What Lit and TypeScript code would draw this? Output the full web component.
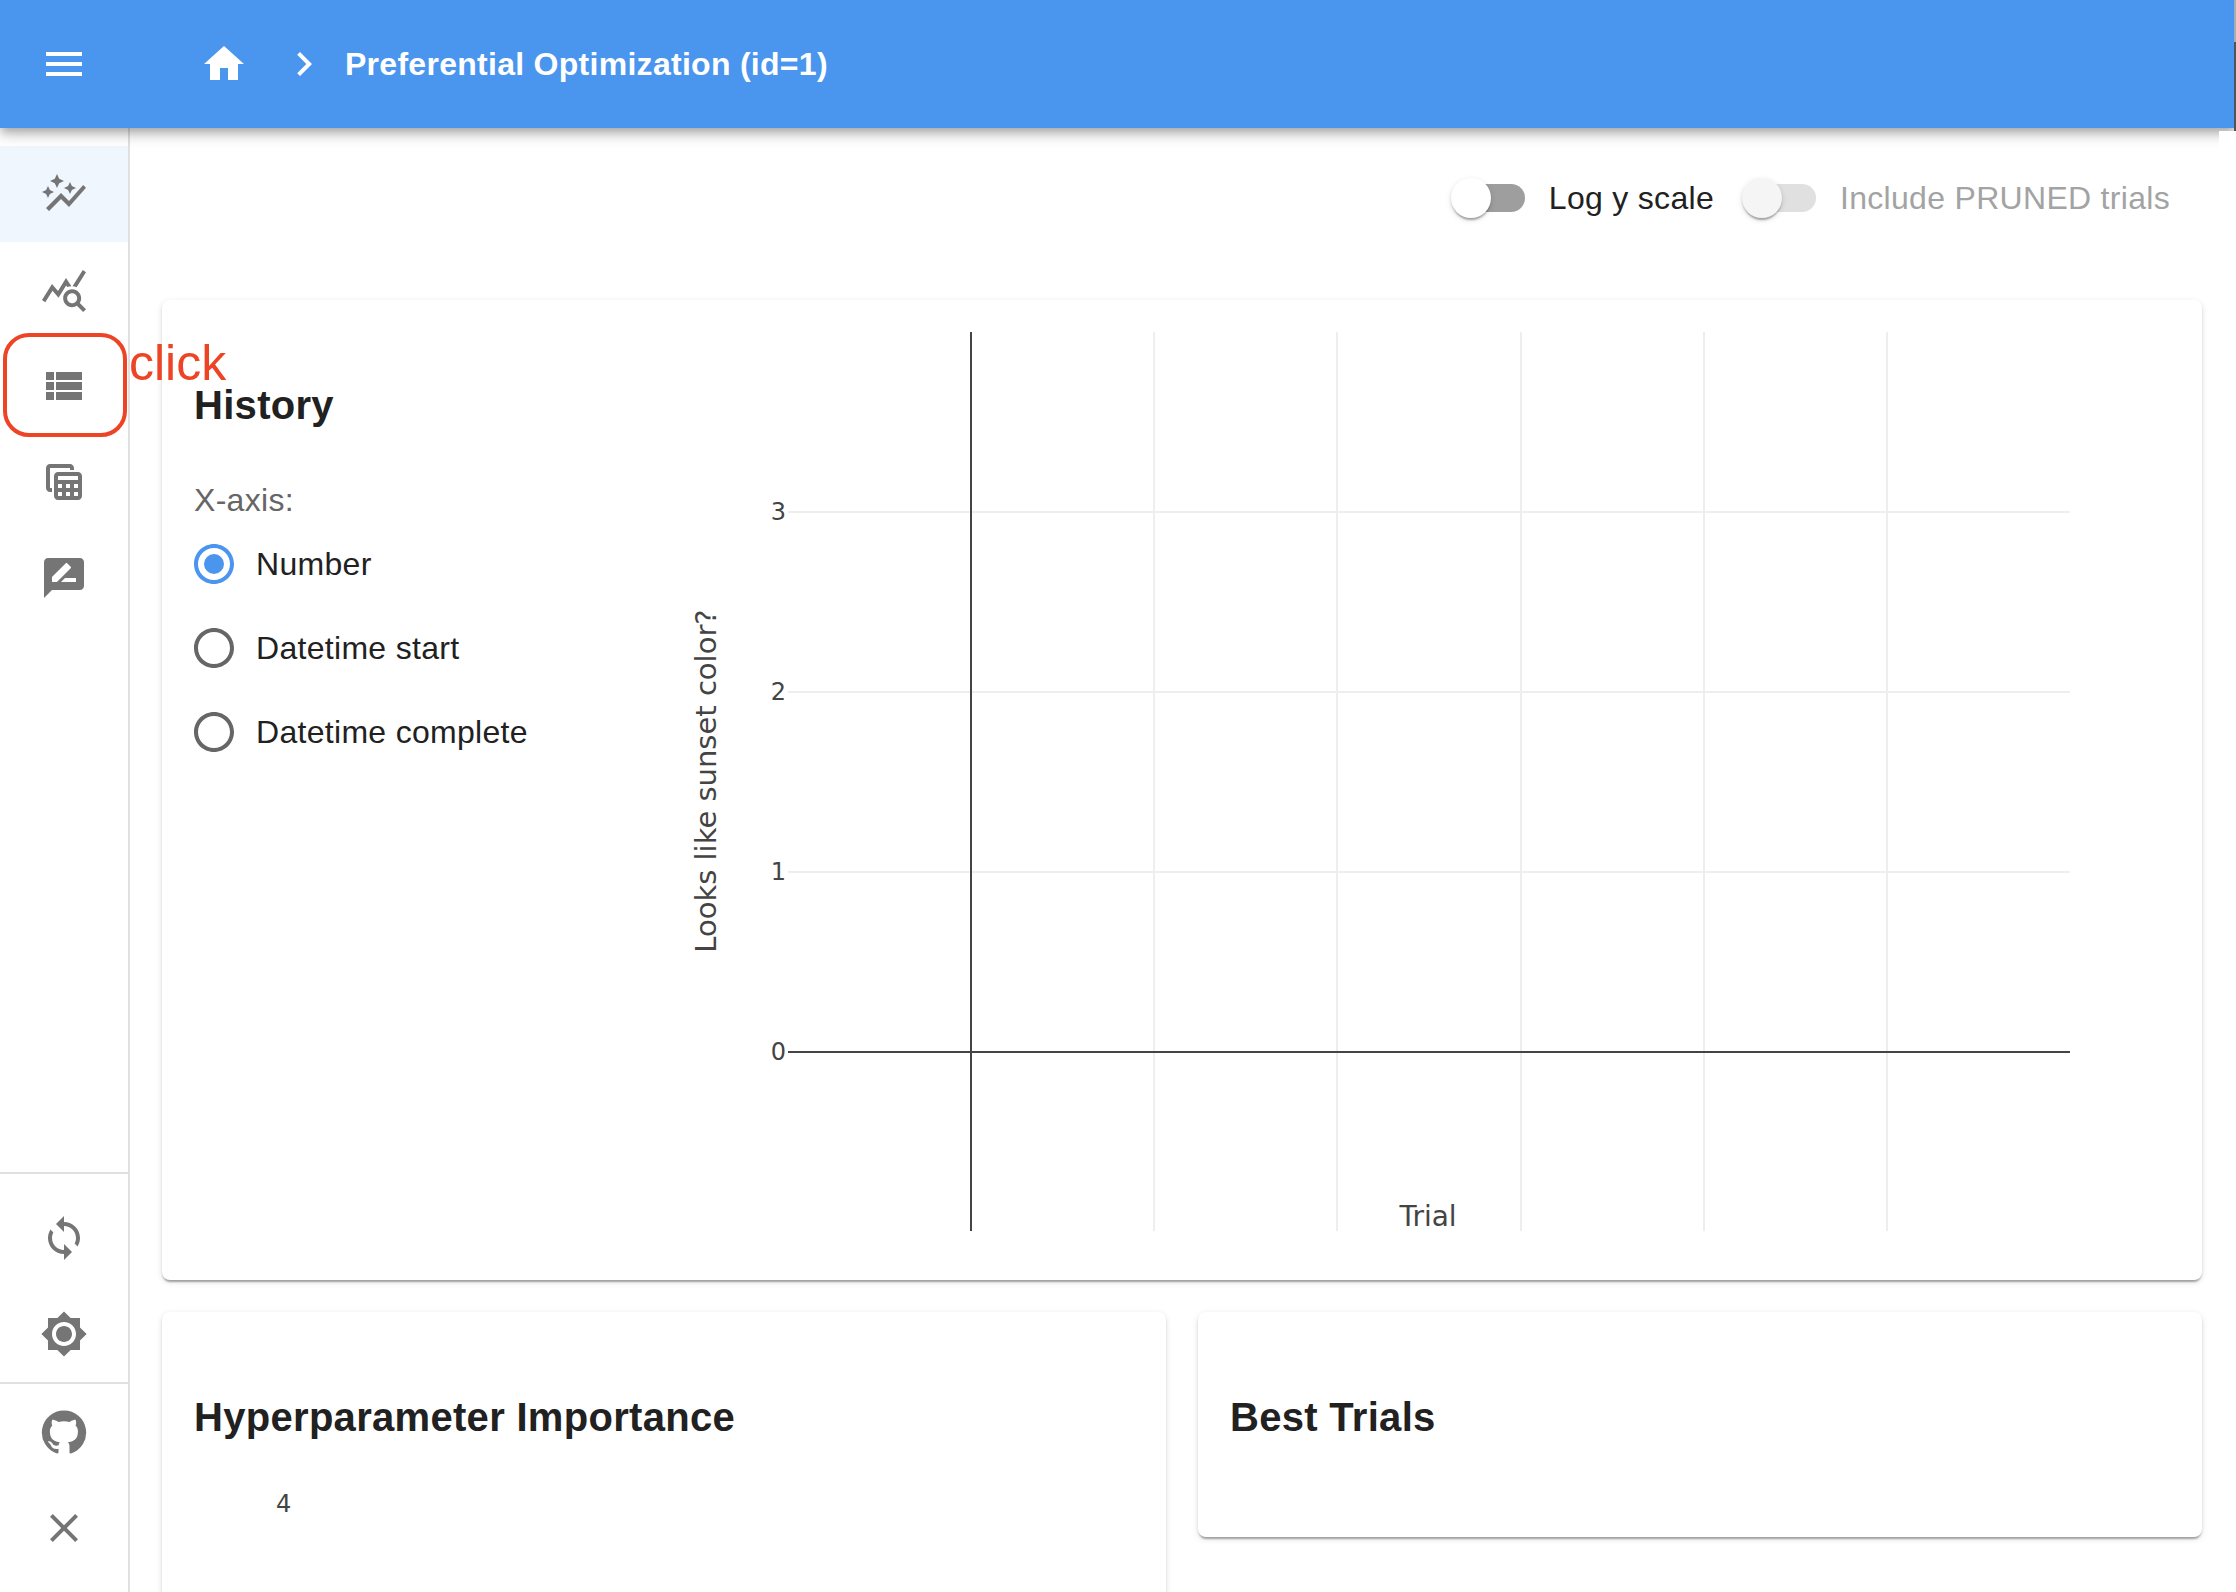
import { LitElement, html, css, svg } from 'lit';
import { customElement } from 'lit/decorators.js';

const ICONS = {
  menu: 'M3 18h18v-2H3v2zm0-5h18v-2H3v2zm0-7v2h18V6H3z',
  home: 'M10 20v-6h4v6h5v-8h3L12 3 2 12h3v8z',
  next: 'M10 6 8.59 7.41 13.17 12l-4.58 4.59L10 18l6-6z',
  autoGraph:
    'M14.06 9.94 12 9l2.06-.94L15 6l.94 2.06L18 9l-2.06.94L15 12zM4 14l.94-2.06L7 11l-2.06-.94L4 8l-.94 2.06L1 11l2.06.94zm4.5-5 1.09-2.41L12 5.5 9.59 4.41 8.5 2 7.41 4.41 5 5.5l2.41 1.09zm-4 11.5 6-6.01 4 4L23 8.92l-1.41-1.41-7.09 7.97-4-4L3 19z',
  queryStats:
    'M19.88 18.47c.44-.7.7-1.51.7-2.39 0-2.49-2.01-4.5-4.5-4.5s-4.5 2.01-4.5 4.5 2.01 4.5 4.49 4.5c.88 0 1.7-.26 2.39-.7L21.58 23 23 21.58l-3.12-3.11zm-3.8.11c-1.38 0-2.5-1.12-2.5-2.5s1.12-2.5 2.5-2.5 2.5 1.12 2.5 2.5-1.12 2.5-2.5 2.5zm-.36-8.5c-.74.02-1.45.18-2.1.45l-.55-.83-3.8 6.18-3.01-3.52-3.63 5.81L1 17l5-8 3 3.5L13 6l2.72 4.08zm2.59.5c-.64-.28-1.33-.45-2.05-.49L21.38 2 23 3.18l-4.69 7.4z',
  viewList: 'M3 14h4v-4H3v4zm0 5h4v-4H3v4zM3 9h4V5H3v4zm5 5h13v-4H8v4zm0 5h13v-4H8v4zM8 5v4h13V5H8z',
  tableView:
    'M19 7H9c-1.1 0-2 .9-2 2v10c0 1.1.9 2 2 2h10c1.1 0 2-.9 2-2V9c0-1.1-.9-2-2-2zm0 2v2H9V9h10zm-6 6v-2h2v2h-2zm2 2v2h-2v-2h2zm-4-2H9v-2h2v2zm6-2h2v2h-2v-2zm-8 4h2v2H9v-2zm8 2v-2h2v2h-2zM6 17H5c-1.1 0-2-.9-2-2V5c0-1.1.9-2 2-2h10c1.1 0 2 .9 2 2v1h-2V5H5v10h1v2z',
  rateReview:
    'M20 2H4c-1.1 0-1.99.9-1.99 2L2 22l4-4h14c1.1 0 2-.9 2-2V4c0-1.1-.9-2-2-2zM6 14v-2.47l6.88-6.88c.2-.2.51-.2.71 0l1.77 1.77c.2.2.2.51 0 .71L8.47 14H6zm12 0h-7.5l2-2H18v2z',
  sync: 'M12 4V1L8 5l4 4V6c3.31 0 6 2.69 6 6 0 1.01-.25 1.97-.7 2.8l1.46 1.46C19.54 15.03 20 13.57 20 12c0-4.42-3.58-8-8-8zm0 14c-3.31 0-6-2.69-6-6 0-1.01.25-1.97.7-2.8L5.24 7.74C4.46 8.97 4 10.43 4 12c0 4.42 3.58 8 8 8v3l4-4-4-4v3z',
  brightness:
    'M20 8.69V4h-4.69L12 .69 8.69 4H4v4.69L.69 12 4 15.31V20h4.69L12 23.31 15.31 20H20v-4.69L23.31 12 20 8.69zM12 18c-3.31 0-6-2.69-6-6s2.69-6 6-6 6 2.69 6 6-2.69 6-6 6zm0-10c-2.21 0-4 1.79-4 4s1.79 4 4 4 4-1.79 4-4-1.79-4-4-4z',
  github:
    'M12 1.27a11 11 0 00-3.48 21.46c.55.09.73-.28.73-.55v-1.84c-3.03.64-3.67-1.46-3.67-1.46-.55-1.29-1.28-1.65-1.28-1.65-.92-.65.1-.65.1-.65 1.1 0 1.73 1.1 1.73 1.1.92 1.65 2.57 1.2 3.21.92a2 2 0 01.64-1.47c-2.47-.27-5.04-1.19-5.04-5.5 0-1.1.46-2.1 1.2-2.84a3.76 3.76 0 010-2.93s.91-.28 3.11 1.1c1.8-.49 3.7-.49 5.5 0 2.1-1.38 3.02-1.1 3.02-1.1a3.76 3.76 0 010 2.93c.83.74 1.2 1.74 1.2 2.94 0 4.21-2.57 5.13-5.04 5.4.45.37.82.92.82 2.02v3.03c0 .27.1.64.73.55A11 11 0 0012 1.27',
  close:
    'M19 6.41 17.59 5 12 10.59 6.41 5 5 6.41 10.59 12 5 17.59 6.41 19 12 13.41 17.59 19 19 17.59 13.41 12z',
  radioOff:
    'M12 2C6.48 2 2 6.48 2 12s4.48 10 10 10 10-4.48 10-10S17.52 2 12 2zm0 18c-4.42 0-8-3.58-8-8s3.58-8 8-8 8 3.58 8 8-3.58 8-8 8z',
  radioOn:
    'M12 2C6.48 2 2 6.48 2 12s4.48 10 10 10 10-4.48 10-10S17.52 2 12 2zm0 18c-4.42 0-8-3.58-8-8s3.58-8 8-8 8 3.58 8 8-3.58 8-8 8zm0-13a5 5 0 1 0 0 10 5 5 0 0 0 0-10z',
};

const icon = (d: string) =>
  html`<svg class="icon" viewBox="0 0 24 24"><path d=${d}></path></svg>`;

const chartX = 660;
const chartY = 332;
const gridX = [1154, 1337, 1521, 1704, 1887];
const ticksY = [
  { label: '3', y: 512 },
  { label: '2', y: 692 },
  { label: '1', y: 872 },
];

@customElement('app-root')
export class AppRoot extends LitElement {
  static styles = css`
    :host {
      display: block;
      position: relative;
      width: 2236px;
      height: 1592px;
      overflow: hidden;
      background: #fff;
      font-family: 'Liberation Sans', Arial, sans-serif;
      color: #212121;
    }
    .icon {
      display: block;
      width: 48px;
      height: 48px;
      fill: currentColor;
      flex: none;
    }
    header {
      position: relative;
      z-index: 2;
      height: 128px;
      background: #4a95ee;
      color: #fff;
      display: flex;
      align-items: center;
      padding-left: 40px;
      box-shadow: 0 4px 8px -2px rgba(0, 0, 0, 0.2), 0 8px 10px 0 rgba(0, 0, 0, 0.14),
        0 2px 20px 0 rgba(0, 0, 0, 0.12);
    }
    .home {
      margin-left: 112px;
    }
    .crumb {
      margin-left: 32px;
    }
    .title {
      margin-left: 17px;
      font-size: 32px;
      font-weight: 700;
      line-height: 48px;
      letter-spacing: 0.28px;
    }
    .body {
      display: flex;
      height: 1464px;
    }
    nav {
      width: 130px;
      box-sizing: border-box;
      flex: none;
      border-right: 2px solid #e0e0e0;
      display: flex;
      flex-direction: column;
      color: #757575;
    }
    .nav-top {
      padding-top: 18px;
      flex: 1;
    }
    .nav-group {
      border-top: 2px solid #e0e0e0;
    }
    .nav-group.sync {
      padding-top: 16px;
    }
    .nav-group.links {
      padding-bottom: 16px;
    }
    .nav-item {
      height: 96px;
      display: flex;
      align-items: center;
      justify-content: center;
    }
    .nav-item.selected {
      background: #eff6fe;
    }
    main {
      flex: 1;
      min-width: 0;
      padding: 0 34px 0 32px;
    }
    .toolbar {
      height: 172px;
      display: flex;
      justify-content: flex-end;
      align-items: flex-start;
      padding-top: 32px;
      box-sizing: border-box;
    }
    .option {
      display: flex;
      align-items: center;
      height: 76px;
      font-size: 32px;
      letter-spacing: 0.3px;
      margin-left: -22px;
      margin-right: 32px;
    }
    .option.disabled {
      color: #a3a3a3;
    }
    .switch {
      position: relative;
      width: 116px;
      height: 76px;
      flex: none;
    }
    .track {
      position: absolute;
      left: 24px;
      right: 24px;
      top: 24px;
      height: 28px;
      border-radius: 14px;
      background: #9e9e9e;
    }
    .thumb {
      position: absolute;
      left: 18px;
      top: 18px;
      width: 40px;
      height: 40px;
      border-radius: 50%;
      background: #fff;
      box-shadow: 0 4px 2px -2px rgba(0, 0, 0, 0.2), 0 2px 2px 0 rgba(0, 0, 0, 0.14),
        0 2px 6px 0 rgba(0, 0, 0, 0.12);
    }
    .disabled .track {
      background: #e0e0e0;
    }
    .disabled .thumb {
      background: #f5f5f5;
    }
    .card {
      background: #fff;
      border-radius: 8px;
      box-shadow: 0 4px 2px -2px rgba(0, 0, 0, 0.2), 0 2px 2px 0 rgba(0, 0, 0, 0.14),
        0 2px 6px 0 rgba(0, 0, 0, 0.12);
      box-sizing: border-box;
    }
    .history {
      height: 980px;
      display: flex;
    }
    .controls {
      width: 498px;
      flex: none;
      box-sizing: border-box;
      padding: 73px 0 0 32px;
    }
    h2 {
      margin: 0;
      font-size: 40px;
      font-weight: 700;
      line-height: 64px;
      letter-spacing: 0.3px;
    }
    .axis-label {
      margin-top: 40px;
      font-size: 32px;
      line-height: 46px;
      letter-spacing: 0.3px;
      color: #666;
    }
    .radio {
      display: flex;
      align-items: center;
      height: 84px;
      font-size: 32px;
      letter-spacing: 0.3px;
      color: #212121;
    }
    .radio .icon {
      margin: 0 18px 0 -4px;
      color: #666;
    }
    .radio.on .icon {
      color: #4a95ee;
    }
    .radios {
      margin-top: -1px;
    }
    .plot {
      display: block;
      margin-top: 32px;
      width: 1540px;
      height: 900px;
      flex: none;
      font-family: 'DejaVu Sans', Verdana, sans-serif;
    }
    .plot text {
      fill: #444;
    }
    .tick {
      font-size: 24px;
    }
    .axis-title {
      font-size: 28px;
    }
    .axis-title.vertical {
      font-size: 29px;
    }
    .grid {
      stroke: #eee;
      stroke-width: 2;
    }
    .axis {
      stroke: #444;
      stroke-width: 2;
    }
    .lower {
      display: flex;
      gap: 32px;
      margin-top: 32px;
      align-items: flex-start;
    }
    .half {
      flex: 1;
      padding: 73px 32px 0;
    }
    .importance {
      height: 400px;
    }
    .best {
      height: 225px;
    }
    .importance-tick {
      margin: 41px 0 0 82px;
      font-family: 'DejaVu Sans', Verdana, sans-serif;
      font-size: 24px;
      line-height: 28px;
      color: #444;
    }
    .mark {
      position: absolute;
      left: 3px;
      top: 333px;
      width: 124px;
      height: 104px;
      box-sizing: border-box;
      border: 4px solid #ee4426;
      border-radius: 26px;
      z-index: 3;
    }
    .mark-label {
      position: absolute;
      left: 129px;
      top: 334px;
      font-size: 50px;
      line-height: 58px;
      color: #ee4426;
      z-index: 3;
    }
    /* capture artefacts at the window's right edge */
    .edge-cover {
      position: absolute;
      left: 2219px;
      top: 131px;
      width: 17px;
      height: 40px;
      background: #fff;
      z-index: 3;
    }
    .edge-light {
      position: absolute;
      left: 2234px;
      top: 0;
      width: 2px;
      height: 42px;
      background: #a9acb0;
      z-index: 3;
    }
    .edge-dark {
      position: absolute;
      left: 2234px;
      top: 42px;
      width: 2px;
      height: 89px;
      background: #4a5560;
      z-index: 3;
    }
  `;

  private renderPlot() {
    return html`<svg class="plot" viewBox="0 0 1540 900">
      ${gridX.map(
        (x) => svg`<line class="grid" x1=${x - chartX} x2=${x - chartX} y1="0" y2="899"></line>`
      )}
      ${ticksY.map(
        (t) => svg`
          <line class="grid" x1=${788 - chartX} x2=${2070 - chartX} y1=${t.y - chartY} y2=${t.y - chartY}></line>
          <text class="tick" x=${786 - chartX} y=${t.y - chartY + 8} text-anchor="end">${t.label}</text>`
      )}
      <line class="axis" x1=${971 - chartX} x2=${971 - chartX} y1="0" y2="899"></line>
      <line class="axis" x1=${788 - chartX} x2=${2070 - chartX} y1=${1052 - chartY} y2=${1052 - chartY}></line>
      <text class="tick" x=${786 - chartX} y=${1052 - chartY + 8} text-anchor="end">0</text>
      <text class="axis-title" x=${1428 - chartX} y=${1226 - chartY} text-anchor="middle">Trial</text>
      <text
        class="axis-title vertical"
        text-anchor="middle"
        transform="translate(${716 - chartX} ${781 - chartY}) rotate(-90)"
      >Looks like sunset color?</text>
    </svg>`;
  }

  render() {
    return html`
      <header>
        ${icon(ICONS.menu)}
        <div class="home">${icon(ICONS.home)}</div>
        <div class="crumb">${icon(ICONS.next)}</div>
        <div class="title">Preferential Optimization (id=1)</div>
      </header>
      <div class="body">
        <nav>
          <div class="nav-top">
            <div class="nav-item selected">${icon(ICONS.autoGraph)}</div>
            <div class="nav-item">${icon(ICONS.queryStats)}</div>
            <div class="nav-item">${icon(ICONS.viewList)}</div>
            <div class="nav-item">${icon(ICONS.tableView)}</div>
            <div class="nav-item">${icon(ICONS.rateReview)}</div>
          </div>
          <div class="nav-group sync">
            <div class="nav-item">${icon(ICONS.sync)}</div>
            <div class="nav-item">${icon(ICONS.brightness)}</div>
          </div>
          <div class="nav-group links">
            <div class="nav-item">${icon(ICONS.github)}</div>
            <div class="nav-item">${icon(ICONS.close)}</div>
          </div>
        </nav>
        <main>
          <div class="toolbar">
            <div class="option">
              <div class="switch"><div class="track"></div><div class="thumb"></div></div>
              <span>Log y scale</span>
            </div>
            <div class="option disabled">
              <div class="switch"><div class="track"></div><div class="thumb"></div></div>
              <span>Include PRUNED trials</span>
            </div>
          </div>
          <section class="card history">
            <div class="controls">
              <h2>History</h2>
              <div class="axis-label">X-axis:</div>
              <div class="radios">
                <div class="radio on">${icon(ICONS.radioOn)}<span>Number</span></div>
                <div class="radio">${icon(ICONS.radioOff)}<span>Datetime start</span></div>
                <div class="radio">${icon(ICONS.radioOff)}<span>Datetime complete</span></div>
              </div>
            </div>
            ${this.renderPlot()}
          </section>
          <div class="lower">
            <section class="card half importance">
              <h2>Hyperparameter Importance</h2>
              <div class="importance-tick">4</div>
            </section>
            <section class="card half best">
              <h2>Best Trials</h2>
            </section>
          </div>
        </main>
      </div>
      <div class="edge-cover"></div>
      <div class="edge-light"></div>
      <div class="edge-dark"></div>
      <div class="mark"></div>
      <div class="mark-label">click</div>
    `;
  }
}
